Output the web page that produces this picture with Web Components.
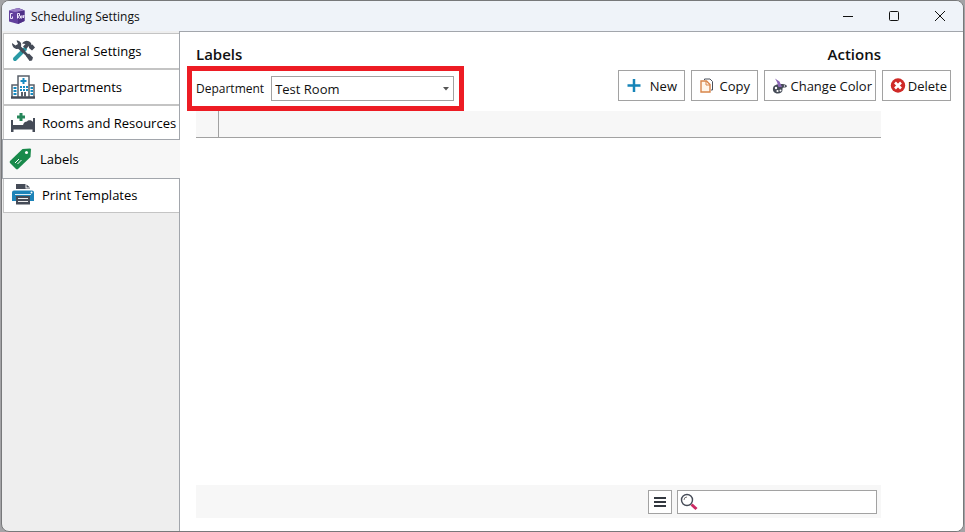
<!DOCTYPE html>
<html lang="en">
<head>
<meta charset="utf-8">
<title>Scheduling Settings</title>
<style>
    body { margin: 0; background: #a3a3a6; font-family: "Open Sans", "Noto Sans", sans-serif; font-size: 13px; color: #111; }
</style>
</head>
<body>
<settings-window caption="Scheduling Settings">
    <settings-tab slot="tabs" icon="tools">General Settings</settings-tab>
    <settings-tab slot="tabs" icon="hospital">Departments</settings-tab>
    <settings-tab slot="tabs" icon="bed">Rooms and Resources</settings-tab>
    <settings-tab slot="tabs" icon="tag" selected>Labels</settings-tab>
    <settings-tab slot="tabs" icon="printer">Print Templates</settings-tab>
    <labels-panel></labels-panel>
</settings-window>

<script>
const ICONS = {
    app: `<svg width="18" height="18" viewBox="0 0 18 18"><path d="M1 3.500 10 1l6.500 2.500V14L10 17 1 14.500z" fill="#62409d"/><path d="M10 1l6.500 2.500V14L10 17z" fill="#4d2f86"/><path d="M1 3.500 10 1l6.500 2.500L7 5z" fill="#9b7fc6"/><path d="M4.500 6.500H2.500v5h2v-2M9.500 11.500v-5h2v2.500h-2l2 2.500M12.500 9h1.500v2h-1.500zM15 8l.5 3 .5-3" fill="none" stroke="#eee6fa"/></svg>`,
    tools: `<svg width="24" height="24" viewBox="0 0 24 24"><path d="M14 10 4 20" stroke="#2a9aa5" stroke-width="4" stroke-linecap="round"/><path d="M7 7l6 6" stroke="#454b57" stroke-width="3.500"/><path d="M12.500 12.500 17 17" stroke="#454b57" stroke-width="2.500"/><path d="M1 4c0 5 4 7 7.500 5.500L10 7.500C11 4 9 1.500 5.500 1.500L7 5 4.500 6.500z" fill="#454b57"/><path d="M15 17l3-2.500 4 4-1 3L18.500 22z" fill="#454b57"/><path d="M11 4.500C14 1 17 1 20 4l.5 2 1-.5L24 8.500 21 11.500 18 9v-2l-3 3-3-2.500 2.500-2.500z" fill="#454b57"/></svg>`,
    hospital: `<svg width="24" height="24" viewBox="0 0 24 24"><path d="M7 22V1h11v21M1 22V10h6M18 10h5v12" fill="#fff" stroke="#59606a" stroke-width="1.500"/><path d="M0 22.500h24" stroke="#454b57" stroke-width="2.500"/><path d="M12.500 3v6M9.500 6h6" stroke="#168bc1" stroke-width="2"/><path d="M2.500 13h3M2.500 16h3M2.500 19h3M9 12h2M12 12h2M15 12h2M9 15h2M12 15h2M15 15h2M19.500 13h2.500M19.500 16h2.500M19.500 19h2.500" stroke="#168bc1" stroke-width="2"/><path d="M10 22v-5h2v5M13 22v-5h2v5" fill="#59606a"/></svg>`,
    bed: `<svg width="24" height="24" viewBox="0 0 24 24"><path d="M0 9h2v5h20V7h2v14h-2.500v-2.500h-19V21H0z" fill="#454b57"/><path d="M12 14c1-3 2-3.500 4-3.500C17 8.500 21 9 22 11v3z" fill="#454b57"/><path d="M10 2v8M6 6h8" stroke="#26865a" stroke-width="3"/></svg>`,
    tag: `<svg width="24" height="24" viewBox="0 0 24 24"><path d="M1 14 13.500 2 21 1.500q1 0 1 1L21.500 10 9 22q-1 .8-2 0L1 16q-.8-1 0-2z" fill="#198a4b"/><circle cx="17.500" cy="5.500" r="1.500" fill="#fff"/><path d="M6 16l4-4M8.500 17l4-4" stroke="#fff"/></svg>`,
    printer: `<svg width="24" height="24" viewBox="0 0 24 24"><path d="M5 6V1h9.500v4.500H19V6z" fill="#454b57"/><path d="M15.500 1.500v3H19z" fill="#454b57"/><path d="M3 7.500h18q2 0 2 2V18h-4v-5H5v5H1V9.500q0-2 2-2z" fill="#1c83b8"/><path d="M4 11.500h16" stroke="#dcecf4"/><circle cx="20.500" cy="9.500" r="1" fill="#fff"/><path d="M5 13h14v8.500H5z" fill="#454b57"/><path d="M7 15.500h10M7 18.500h10" stroke="#eee"/></svg>`,
    plus: `<svg width="16" height="16" viewBox="0 0 16 16"><path d="M8 1v13M1.500 7.500h13" stroke="#1684b8" stroke-width="2.500"/></svg>`,
    copy: `<svg width="16" height="16" viewBox="0 0 16 16" fill="none"><path d="M5.500 2V1H11l2.500 2.500V12H12" stroke="#4b515c"/><path d="M2 3h5.500L11 6.500V14H2z" fill="#fff5ea" stroke="#d8854a" stroke-width="1.400"/><path d="M7 3v4h4" stroke="#d8854a"/></svg>`,
    palette: `<svg width="16" height="16" viewBox="0 0 16 16"><path d="M1 10C2 6 8 5.500 13 6.500c3 1 2.500 3-1 3-2 0-1.500 1.500-1.500 2.500 0 2-2 3.500-4.500 3.500-4 0-5.500-2.500-5-5.500z" fill="#454b57"/><g fill="#fff"><circle cx="4" cy="10" r="1.200"/><circle cx="5.500" cy="13" r="1.100"/><circle cx="8.500" cy="12.500" r="1"/><circle cx="12.500" cy="8" r=".7"/></g><path d="M3 .5 7.500 3.500 10 9 6.500 9 5 4z" fill="#8c67b7"/></svg>`,
    remove: `<svg width="16" height="16" viewBox="0 0 16 16"><circle cx="8" cy="7.500" r="7.200" fill="#cf2a27"/><path d="M5 4.500l6 6M11 4.500l-6 6" stroke="#fff" stroke-width="2.600"/></svg>`,
    search: `<svg width="18" height="18" viewBox="0 0 18 18" fill="none"><path d="M11.500 11.500l5 4.500" stroke="#cb2a63" stroke-width="3"/><circle cx="7" cy="7" r="5.500" stroke="#454b57" stroke-width="1.400"/><path d="M4 7q0-3 3-3" stroke="#777"/></svg>`,
    list: `<svg width="12" height="12" viewBox="0 0 12 12"><path d="M0 2h12M0 6h12M0 10h12" stroke="#33383f" stroke-width="2"/></svg>`
};

class SettingsWindow extends HTMLElement {
    constructor() {
        super();
        this.attachShadow({ mode: 'open' });
    }

    connectedCallback() {
        this.shadowRoot.innerHTML = `
        <style>
            :host { display: flex; flex-direction: column; box-sizing: border-box; min-height: 100vh; margin: 0 1px; border: 1px solid #77787a; border-radius: 8px; overflow: hidden; background: #eee; }
            header { display: flex; align-items: center; height: 30px; padding-left: 6px; background: #eff3f9; }
            h1 { flex: 1; margin: 0 0 0 5px; font-size: 12px; font-weight: 400; }
            header button { display: grid; place-items: center; width: 46px; height: 28px; padding: 0; border: 0; background: none; }
            header button svg { fill: none; stroke: #111; }
            .body { flex: 1; display: grid; grid-template-columns: 177px minmax(0, 1fr); }
            nav { padding: 2px 0 0 1px; }
            main { display: flex; border: 1px solid #a2a6ac; border-width: 1px 0 0 1px; background: #fff; }
            ::slotted(labels-panel) { flex: 1; }
        </style>
        <header>
            ${ICONS.app}
            <h1>${this.getAttribute('caption')}</h1>
            <button aria-label="Minimize"><svg width="10" height="10"><path d="M0 5.500h10"/></svg></button>
            <button aria-label="Maximize"><svg width="10" height="10"><rect x=".5" y=".5" width="9" height="9" rx="1"/></svg></button>
            <button aria-label="Close"><svg width="10" height="10"><path d="M0 0l10 10M10 0L0 10"/></svg></button>
        </header>
        <div class="body">
            <nav><slot name="tabs"></slot></nav>
            <main><slot></slot></main>
        </div>`;
    }
}
customElements.define('settings-window', SettingsWindow);

class SettingsTab extends HTMLElement {
    constructor() {
        super();
        this.attachShadow({ mode: 'open' });
    }

    connectedCallback() {
        this.shadowRoot.innerHTML = `
        <style>
            :host { display: block; height: 36px; }
            button { display: flex; align-items: center; gap: 7px; box-sizing: border-box; width: 100%; height: 36px; padding: 0 0 0 7px; border: 1px solid #c4c4c4; border-right: 0; background: #fff; color: #000; font: inherit; font-weight: 500; white-space: nowrap; }
            svg { flex: none; }
            :host([selected]) { position: relative; z-index: 1; margin: -2px 0 -2px -1px; height: 40px; }
            :host([selected]) button { height: 40px; width: calc(100% + 1px); padding-left: 6px; border-color: #a2a6ac; background: #f7f7f7; }
        </style>
        <button>${ICONS[this.getAttribute('icon')]}<slot></slot></button>`;
    }
}
customElements.define('settings-tab', SettingsTab);

class ActionButton extends HTMLElement {
    constructor() {
        super();
        this.attachShadow({ mode: 'open' });
    }

    connectedCallback() {
        this.shadowRoot.innerHTML = `
        <style>
            :host { display: block; }
            button { display: flex; align-items: center; justify-content: space-between; box-sizing: border-box; width: 100%; height: 31px; padding: 0 3px 0 7px; border: 1px solid #a2a2a2; background: #fff; color: #111; font: inherit; white-space: nowrap; }
            svg { flex: none; }
            :host([roomy]) button { padding-right: 7px; }
        </style>
        <button>${ICONS[this.getAttribute('icon')]}<slot></slot></button>`;
    }
}
customElements.define('action-button', ActionButton);

class DepartmentPicker extends HTMLElement {
    constructor() {
        super();
        this.attachShadow({ mode: 'open' });
    }

    connectedCallback() {
        this.shadowRoot.innerHTML = `
        <style>
            :host { display: flex; align-items: center; gap: 7px; box-sizing: border-box; height: 45px; padding: 0 5px 0 4px; border: 5px solid #ed1c24; }
            label { font-size: 12px; }
            .field { display: grid; align-items: center; }
            select, svg { grid-area: 1 / 1; }
            select { appearance: none; width: 183px; height: 25px; padding: 0 3px; border: 1px solid #a2a2a2; border-radius: 0; background: #fff; color: #111; font: inherit; }
            svg { justify-self: end; margin-right: 5px; pointer-events: none; }
        </style>
        <label for="department">Department</label>
        <div class="field">
            <select id="department"><option>Test Room</option></select>
            <svg width="6" height="4"><path d="M0 0h6L3 3.500z" fill="#555"/></svg>
        </div>`;
    }
}
customElements.define('department-picker', DepartmentPicker);

class LabelsPanel extends HTMLElement {
    constructor() {
        super();
        this.attachShadow({ mode: 'open' });
    }

    connectedCallback() {
        this.shadowRoot.innerHTML = `
        <style>
            :host { display: flex; flex-direction: column; box-sizing: border-box; padding: 12px 12px 13px 16px; }
            .titles { display: flex; justify-content: space-between; margin: 0 70px 2px 0; }
            h2 { margin: 0; font-size: 15px; line-height: 20px; font-weight: 600; }
            .toolbar { display: flex; justify-content: space-between; align-items: flex-start; }
            department-picker { margin-left: -9px; }
            .actions { display: grid; grid-template-columns: 67px 67px 112px 69px; gap: 6px; padding-top: 4px; }
            .list { flex: 1; display: flex; flex-direction: column; justify-content: space-between; margin-right: 70px; }
            table { width: 100%; border-collapse: collapse; table-layout: fixed; background: #f7f7f7; }
            th { height: 26px; padding: 0; border-bottom: 1px solid #a2a2a2; }
            th:first-child { width: 22px; border-right: 1px solid #a2a2a2; }
            footer { display: flex; justify-content: flex-end; align-items: center; gap: 5px; height: 33px; padding-right: 4px; background: #f7f7f7; }
            footer button { display: grid; place-items: center; width: 24px; height: 24px; padding: 0; border: 1px solid #a2a2a2; background: #fff; }
            .search { display: flex; align-items: center; box-sizing: border-box; width: 200px; height: 24px; padding-left: 2px; border: 1px solid #a2a2a2; background: #fff; }
            .search input { flex: 1; min-width: 0; border: 0; outline: 0; background: none; font: inherit; }
        </style>
        <div class="titles"><h2>Labels</h2><h2>Actions</h2></div>
        <div class="toolbar">
            <department-picker></department-picker>
            <div class="actions">
                <action-button icon="plus" roomy>New</action-button>
                <action-button icon="copy" roomy>Copy</action-button>
                <action-button icon="palette">Change Color</action-button>
                <action-button icon="remove">Delete</action-button>
            </div>
        </div>
        <div class="list">
            <table aria-label="Labels"><thead><tr><th></th><th></th></tr></thead></table>
            <footer>
                <button aria-label="List options">${ICONS.list}</button>
                <label class="search">${ICONS.search}<input type="text" aria-label="Search"></label>
            </footer>
        </div>`;
    }
}
customElements.define('labels-panel', LabelsPanel);
</script>
</body>
</html>
